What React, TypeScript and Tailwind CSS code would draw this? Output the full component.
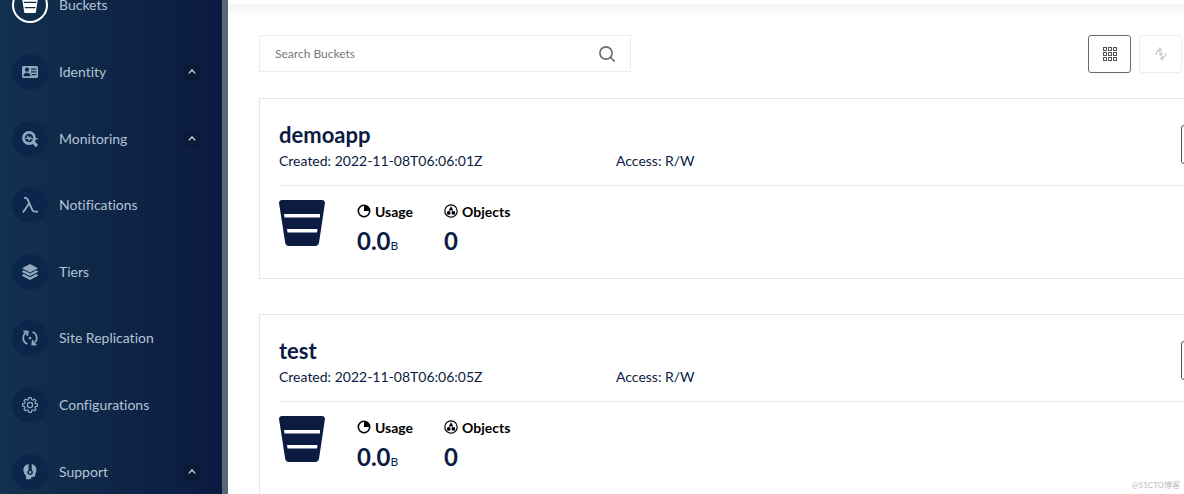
import type { ReactNode } from "react";

type NavEntry = { label: string; icon: ReactNode; active?: boolean; expandable?: boolean };
type Bucket = { name: string; created: string; access: string; usage: string; unit: string; objects: number };

const BucketIcon = ({ className, stripe }: { className: string; stripe: string }) => (
  <svg viewBox="0 0 46 46" className={className} aria-hidden="true">
    <path
      fill="currentColor"
      d="M3 0h40c2 0 3.200 1.500 2.900 3.400L40 42.800C39.700 44.800 38.300 46 36.300 46H9.900C7.900 46 6.500 44.800 6.200 42.800L.1 3.400C-.2 1.500 1 0 3 0z"
    />
    <path fill={stripe} d="M5 14h36v3.600H5.500zM8 29h30.500l-.5 3.600H8.500z" />
  </svg>
);

const IdentityIcon = () => (
  <svg viewBox="0 0 16 12" className="h-3 w-4" aria-hidden="true">
    <path
      fill="currentColor"
      fillRule="evenodd"
      d="M1.500 0h13A1.500 1.500 0 0 1 16 1.500v9a1.500 1.500 0 0 1-1.500 1.500h-13A1.500 1.500 0 0 1 0 10.500v-9A1.500 1.500 0 0 1 1.500 0zM5 1.600a2.100 2.100 0 1 0 0 4.200 2.100 2.100 0 0 0 0-4.200zM1.500 10.200h7c0-2-1.300-3.500-3.500-3.500s-3.500 1.500-3.500 3.500zM9 2.600v1.200h5.500V2.600zM9 5.300v1.200h5.500V5.300zM9.500 8v1.200h5V8z"
    />
  </svg>
);

const MonitoringIcon = () => (
  <svg viewBox="0 0 16 16" className="size-4" fill="none" stroke="currentColor" aria-hidden="true">
    <circle cx="7" cy="7" r="5.600" strokeWidth="2.600" />
    <path d="M11.200 11.200l3.800 3.800" strokeWidth="3.200" />
    <path d="M3.500 7.500h1.300l1-2 1.200 3.500 1.200-2.700 1 1.500H16" strokeWidth="1.200" />
  </svg>
);

const LambdaIcon = () => (
  <svg viewBox="0 0 16 16" className="size-4" fill="none" stroke="currentColor" strokeWidth="1.900" aria-hidden="true">
    <path d="M2 .9h1.400c1.200 0 1.700.5 2.200 1.600l4.700 10.300c.6 1.300 1.200 1.800 2.400 1.800H16M7.300 6.200L.9 15.500" />
  </svg>
);

const TiersIcon = () => (
  <svg viewBox="0 0 16 16" className="size-4" aria-hidden="true">
    <path fill="currentColor" d="M8 0l8 4.200-8 4.200-8-4.200z" />
    <path
      fill="currentColor"
      d="M0 7.200l1.800-.9L8 9.500l6.200-3.200 1.800.9v.7l-8 4.200-8-4.200zM0 11l1.800-.9L8 13.300l6.200-3.200 1.800.9v.7L8 16l-8-4.300z"
    />
  </svg>
);

const CycleIcon = ({ className }: { className: string }) => (
  <svg viewBox="0 0 16 16" className={className} fill="none" stroke="currentColor" strokeWidth="1.700" aria-hidden="true">
    <path d="M5.400 14A6.400 6.400 0 0 1 4.800 2.300M10.600 2a6.400 6.400 0 0 1 .6 11.700" />
    <path d="M1.500 1.400l4.200.2-.5 4.300M14.500 14.600l-4.200-.2.500-4.300" />
    <circle cx="8" cy="8" r="1.300" fill="currentColor" stroke="none" />
  </svg>
);

const RefreshIcon = () => (
  <svg viewBox="0 0 12 14" className="h-[14px] w-3" fill="none" stroke="currentColor" strokeWidth="1.200" aria-hidden="true">
    <path d="M1.300 7.800A4.600 4.600 0 0 1 5.600 2.600M10.700 6.200A4.600 4.600 0 0 1 6.400 11.400" />
    <path d="M3.800.6l2.400 2-2 2.200M8.200 13.400l-2.400-2 2-2.200" />
    <circle cx="6" cy="7" r="1.200" />
  </svg>
);

const GearIcon = () => (
  <svg viewBox="0 0 16 16" className="size-4" fill="none" stroke="currentColor" strokeWidth="1.200" strokeLinejoin="round" aria-hidden="true">
    <path d="M6.700.7h2.600l.4 2 1.100.5 1.700-1.100 1.500 1.500-1.100 1.700.5 1.100 2 .4v2.400l-2 .4-.5 1.100 1.100 1.700-1.500 1.500-1.700-1.100-1.100.5-.4 2H6.700l-.4-2-1.100-.5-1.700 1.100L2 12.400l1.100-1.700-.5-1.100-2-.4V6.800l2-.4.5-1.100L2 3.600l1.500-1.500 1.700 1.100 1.100-.5z" />
    <circle cx="8" cy="8" r="2.600" />
  </svg>
);

const SupportIcon = () => (
  <svg viewBox="0 0 16 18" className="h-[17px] w-4" aria-hidden="true">
    <path
      fill="currentColor"
      fillRule="evenodd"
      d="M6.500 1v6.300a3 3 0 1 0 3.300 0V1c3 .6 5 3 5 6 0 2.400-.9 3.700-1.200 5.200l-.3 2.200-3.600.4-1 2.500H4l-.4-4C2 11.800 1 9.500 1 7.200 1 4 3.300 1.500 6.500 1zM8.100 8.500a1.400 1.400 0 1 1 0 2.800 1.400 1.400 0 0 1 0-2.800z"
    />
  </svg>
);

const SearchIcon = () => (
  <svg viewBox="0 0 16 16" className="size-4 shrink-0 text-[#6b6b6b]" fill="none" stroke="currentColor" strokeWidth="1.600" aria-hidden="true">
    <circle cx="7" cy="7" r="6.100" />
    <path d="M11.300 11.300l4.200 4.200" />
  </svg>
);

const GridIcon = () => (
  <svg viewBox="0 0 14 14" className="size-[14px]" fill="none" stroke="currentColor" aria-hidden="true">
    {[0.5, 5.5, 10.5].map((y) =>
      [0.5, 5.5, 10.5].map((x) => <rect key={`${x}-${y}`} x={x} y={y} width="3" height="3" />),
    )}
  </svg>
);

const UsageIcon = () => (
  <svg viewBox="0 0 14 14" className="mt-px size-[14px]" aria-hidden="true">
    <circle cx="7" cy="7" r="5.700" fill="none" stroke="currentColor" strokeWidth="1.600" />
    <path fill="currentColor" d="M7 1a6 6 0 0 1 6 6H7z" />
  </svg>
);

const ObjectsIcon = () => (
  <svg viewBox="0 0 14 14" className="mt-px size-[14px]" aria-hidden="true">
    <circle cx="7" cy="7" r="6.200" fill="none" stroke="currentColor" strokeWidth="1.200" />
    <path fill="currentColor" d="M7 2.200l2.400 4.200H4.600zM7.700 7.300h3.300v3.300H7.700z" />
    <circle cx="4.700" cy="8.900" r="1.900" fill="currentColor" />
  </svg>
);

const navEntries: NavEntry[] = [
  { label: "Buckets", icon: <BucketIcon className="size-4" stripe="#102a4a" />, active: true },
  { label: "Identity", icon: <IdentityIcon />, expandable: true },
  { label: "Monitoring", icon: <MonitoringIcon />, expandable: true },
  { label: "Notifications", icon: <LambdaIcon /> },
  { label: "Tiers", icon: <TiersIcon /> },
  { label: "Site Replication", icon: <CycleIcon className="size-4" /> },
  { label: "Configurations", icon: <GearIcon /> },
  { label: "Support", icon: <SupportIcon />, expandable: true },
];

const buckets: Bucket[] = [
  { name: "demoapp", created: "2022-11-08T06:06:01Z", access: "R/W", usage: "0.0", unit: "B", objects: 0 },
  { name: "test", created: "2022-11-08T06:06:05Z", access: "R/W", usage: "0.0", unit: "B", objects: 0 },
];

function NavItem({ label, icon, active, expandable }: NavEntry) {
  return (
    <a href="#" className="flex items-center pr-[22px] pl-3 text-sm text-[#b3c3d4]">
      <span
        className={
          active
            ? "flex size-9 items-center justify-center rounded-full border-2 border-white text-white"
            : "flex size-9 items-center justify-center rounded-full bg-[#0b264b] text-[#93a9be]"
        }
      >
        {icon}
      </span>
      <span className="ml-[11px] flex-1">{label}</span>
      {expandable && (
        <span className="flex size-4 items-center justify-center bg-[#0c1a3a] text-[#d5dde8]">
          <svg viewBox="0 0 8 5" className="h-[5px] w-2" fill="none" stroke="currentColor" strokeWidth="1.200" aria-hidden="true">
            <path d="M.8 4.400L4 1l3.200 3.400" />
          </svg>
        </span>
      )}
    </a>
  );
}

function BucketCard({ bucket }: { bucket: Bucket }) {
  return (
    <article className="-mr-16 border border-[#e5e5e5] bg-white px-[19px] pt-[23px] pb-[22px] text-[#0b1b42]">
      <header className="flex items-start justify-between border-b border-[#eaeaea] pb-[14px]">
        <div className="flex-1">
          <h2 className="text-[22px] leading-[26px] font-bold">{bucket.name}</h2>
          <div className="mt-[3px] flex text-sm leading-5">
            <p className="w-[337px]">Created: {bucket.created}</p>
            <p>Access: {bucket.access}</p>
          </div>
        </div>
        <button
          type="button"
          aria-label={`Manage ${bucket.name}`}
          className="mt-[3px] h-[39px] w-[47px] rounded-[3px] border border-[#555]"
        />
      </header>
      <div className="flex items-start pt-[14px]">
        <BucketIcon className="size-[46px]" stripe="#ffffff" />
        <dl className="ml-8 flex gap-[31px]">
          <div>
            <dt className="flex items-start gap-1 pt-[3px] text-sm leading-[18px] font-bold text-black">
              <UsageIcon />
              Usage
            </dt>
            <dd className="mt-[5px] text-2xl leading-[30px] font-bold">
              {bucket.usage}
              <span className="text-xs font-normal">{bucket.unit}</span>
            </dd>
          </div>
          <div>
            <dt className="flex items-start gap-1 pt-[3px] text-sm leading-[18px] font-bold text-black">
              <ObjectsIcon />
              Objects
            </dt>
            <dd className="mt-[5px] text-2xl leading-[30px] font-bold">{bucket.objects}</dd>
          </div>
        </dl>
      </div>
    </article>
  );
}

export default function App() {
  return (
    <div className="relative flex h-screen overflow-hidden bg-white font-['Lato','Noto_Sans_CJK_SC',sans-serif] [font-variant-ligatures:no-common-ligatures]">
      <aside className="w-[228px] shrink-0 overflow-hidden border-r-[6px] border-[#5b6676] bg-linear-to-r from-[#12314e] to-[#0b1a40]">
        <nav className="-mt-7 grid h-[533px] auto-rows-fr">
          {navEntries.map((entry) => (
            <NavItem key={entry.label} {...entry} />
          ))}
        </nav>
      </aside>
      <main className="min-w-0 flex-1 overflow-hidden">
        <div className="mt-1 h-[31px] bg-linear-to-b from-[#f4f4f4] from-0% via-[#fafafa] via-25% to-white to-40%" />
        <div className="flex items-start justify-between pr-[2px] pl-[31px]">
          <label className="flex h-[37px] w-[372px] items-center border border-[#ececec] px-[15px]">
            <input
              type="search"
              aria-label="Search Buckets"
              placeholder="Search Buckets"
              className="min-w-0 flex-1 bg-transparent text-xs outline-none placeholder:text-[#777]"
            />
            <SearchIcon />
          </label>
          <div className="flex gap-2">
            <button type="button" aria-label="Grid view" className="flex h-[38px] w-[43px] items-center justify-center rounded-[3px] border border-[#6b6b6b] text-[#555]">
              <GridIcon />
            </button>
            <button type="button" aria-label="Refresh" disabled className="flex h-[38px] w-[43px] items-center justify-center rounded-[3px] border border-[#eee] text-[#c4c4c4]">
              <RefreshIcon />
            </button>
          </div>
        </div>
        <section className="mt-[25px] flex flex-col gap-[35px] pl-[31px]">
          {buckets.map((bucket) => (
            <BucketCard key={bucket.name} bucket={bucket} />
          ))}
        </section>
      </main>
      <span className="absolute right-1 bottom-[3px] text-[8px] leading-3 text-[#bbb]">@51CTO博客</span>
    </div>
  );
}
